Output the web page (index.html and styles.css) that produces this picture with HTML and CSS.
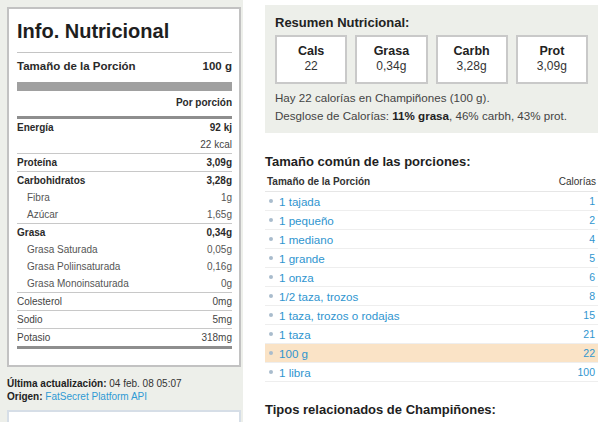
FILE: index.html
```html
<!DOCTYPE html>
<html lang="es">
<head>
<meta charset="utf-8">
<title>Champiñones</title>
<link rel="stylesheet" href="styles.css">
</head>
<body>
<div class="page">
  <aside class="side">
    <div class="label">
      <h1 class="label-title">Info. Nutricional</h1>
      <div class="serving"><span>Tamaño de la Porción</span><span>100 g</span></div>
      <div class="bar"></div>
      <div class="per">Por porción</div>
      <div class="rows">
        <div class="row b"><span>Energía</span><span>92 kj</span></div>
        <div class="row"><span></span><span>22 kcal</span></div>
        <div class="row b sep"><span>Proteína</span><span>3,09g</span></div>
        <div class="row b sep"><span>Carbohidratos</span><span>3,28g</span></div>
        <div class="row sub"><span>Fibra</span><span>1g</span></div>
        <div class="row sub"><span>Azúcar</span><span>1,65g</span></div>
        <div class="row b sep"><span>Grasa</span><span>0,34g</span></div>
        <div class="row sub"><span>Grasa Saturada</span><span>0,05g</span></div>
        <div class="row sub"><span>Grasa Poliinsaturada</span><span>0,16g</span></div>
        <div class="row sub"><span>Grasa Monoinsaturada</span><span>0g</span></div>
        <div class="row sep"><span>Colesterol</span><span>0mg</span></div>
        <div class="row sep"><span>Sodio</span><span>5mg</span></div>
        <div class="row sep"><span>Potasio</span><span>318mg</span></div>
      </div>
    </div>
    <div class="meta">
      <div><b>Última actualización:</b> 04 feb. 08 05:07</div>
      <div><b>Origen:</b> <a href="#" class="link">FatSecret Platform API</a></div>
    </div>
    <div class="next-box"></div>
  </aside>

  <main class="main">
    <section class="summary">
      <h2 class="sum-title">Resumen Nutricional:</h2>
      <div class="facts">
        <div class="fact"><div class="fact-name">Cals</div><div class="fact-val">22</div></div>
        <div class="fact"><div class="fact-name">Grasa</div><div class="fact-val">0,34g</div></div>
        <div class="fact"><div class="fact-name">Carbh</div><div class="fact-val">3,28g</div></div>
        <div class="fact"><div class="fact-name">Prot</div><div class="fact-val">3,09g</div></div>
      </div>
      <p class="sum-text">Hay 22 calorías en Champiñones (100 g).</p>
      <p class="sum-text">Desglose de Calorías: <b>11% grasa</b>, 46% carbh, 43% prot.</p>
    </section>

    <h2 class="sec-title">Tamaño común de las porciones:</h2>
    <div class="portions">
      <div class="p-head"><span class="p-head-l">Tamaño de la Porción</span><span>Calorías</span></div>
      <div class="p-row"><a href="#" class="p-name">1 tajada</a><span class="p-cal">1</span></div>
      <div class="p-row"><a href="#" class="p-name">1 pequeño</a><span class="p-cal">2</span></div>
      <div class="p-row"><a href="#" class="p-name">1 mediano</a><span class="p-cal">4</span></div>
      <div class="p-row"><a href="#" class="p-name">1 grande</a><span class="p-cal">5</span></div>
      <div class="p-row"><a href="#" class="p-name">1 onza</a><span class="p-cal">6</span></div>
      <div class="p-row"><a href="#" class="p-name">1/2 taza, trozos</a><span class="p-cal">8</span></div>
      <div class="p-row"><a href="#" class="p-name">1 taza, trozos o rodajas</a><span class="p-cal">15</span></div>
      <div class="p-row"><a href="#" class="p-name">1 taza</a><span class="p-cal">21</span></div>
      <div class="p-row active"><a href="#" class="p-name">100 g</a><span class="p-cal">22</span></div>
      <div class="p-row"><a href="#" class="p-name">1 libra</a><span class="p-cal">100</span></div>
    </div>

    <h2 class="sec-title related">Tipos relacionados de Champiñones:</h2>
  </main>
</div>
</body>
</html>
```

FILE: styles.css
```css
html, body {
  margin: 0;
  padding: 0;
  background: #ffffff;
}
body {
  font-family: "Liberation Sans", Arial, Helvetica, sans-serif;
  color: #333;
}
.page {
  display: flex;
  width: 600px;
  height: 422px;
  overflow: hidden;
}

/* ---------- left column ---------- */
.side {
  width: 234px;
  flex: none;
  background: #edefea;
  padding: 7px 2px 0 7px;
}
.label {
  background: #fff;
  border: 2px solid #c2c2c2;
  padding: 10px 7px 16px 8px;
}
.label-title {
  margin: 0;
  font-size: 20px;
  line-height: 24px;
  font-weight: bold;
  color: #1e1e1e;
  padding-bottom: 9px;
  border-bottom: 1px solid #c4c4c4;
}
.serving {
  display: flex;
  justify-content: space-between;
  font-size: 11.5px;
  line-height: 14px;
  font-weight: bold;
  color: #2a2a2a;
  padding-top: 6px;
}
.bar {
  height: 9px;
  background: #a0a0a0;
  margin-top: 9px;
}
.per {
  text-align: right;
  font-size: 10px;
  line-height: 17px;
  font-weight: bold;
  color: #2a2a2a;
  margin-top: 3px;
  padding-bottom: 5px;
  border-bottom: 3px solid #8e8e8e;
}
.rows {
  border-bottom: 3px solid #8e8e8e;
}
.row {
  display: flex;
  justify-content: space-between;
  font-size: 10px;
  line-height: 17px;
  color: #444;
}
.row.b {
  font-weight: bold;
  color: #2a2a2a;
}
.row.sep {
  border-top: 1px solid #c8c8c8;
}
.row.sub {
  padding-left: 10px;
  color: #555;
}
.meta {
  margin-top: 10px;
  font-size: 10px;
  line-height: 13px;
  color: #333;
}
.meta b {
  color: #222;
}
.link {
  color: #2f9ad4;
  text-decoration: none;
}
.next-box {
  margin-top: 7px;
  height: 40px;
  background: #fff;
  border: 2px solid #d6dee7;
}

/* ---------- right column ---------- */
.main {
  margin-left: 22px;
  width: 333px;
  flex: none;
}
.summary {
  margin-top: 5px;
  background: #edefea;
  padding: 10px 10px 8px 10px;
}
.sum-title {
  margin: 0;
  font-size: 13px;
  line-height: 16px;
  font-weight: bold;
  color: #222;
}
.facts {
  display: flex;
  gap: 8px;
  margin-top: 4px;
}
.fact {
  flex: 1;
  background: #fff;
  border: 2px solid #c9c9c9;
  text-align: center;
  padding-top: 7px;
  height: 38px;
}
.fact-name {
  font-size: 12.5px;
  line-height: 15px;
  font-weight: bold;
  color: #222;
}
.fact-val {
  font-size: 12px;
  line-height: 15px;
  color: #333;
}
.sum-text {
  margin: 0;
  font-size: 11.6px;
  line-height: 18px;
  color: #444;
}
.facts + .sum-text {
  margin-top: 5px;
}
.sum-text b {
  color: #222;
}
.sec-title {
  margin: 21px 0 0 0;
  font-size: 13px;
  line-height: 16px;
  font-weight: bold;
  color: #1e1e1e;
}
.portions {
  margin-top: 5px;
}
.p-head {
  display: flex;
  justify-content: space-between;
  font-size: 10px;
  line-height: 14px;
  padding: 0 2px 2px 2px;
  border-bottom: 1px solid #e6e6e6;
  color: #333;
}
.p-head-l {
  font-weight: bold;
}
.p-row {
  display: flex;
  justify-content: space-between;
  align-items: center;
  height: 18px;
  padding: 0 3px 0 4px;
  border-bottom: 1px solid #eeeeee;
}
.p-row.active {
  background: #fae3c6;
}
.p-name {
  position: relative;
  padding-left: 10px;
  font-size: 11.6px;
  color: #2f95cf;
  text-decoration: none;
}
.p-name::before {
  content: "";
  position: absolute;
  left: 0;
  top: 50%;
  width: 4px;
  height: 4px;
  margin-top: -2px;
  border-radius: 50%;
  background: #a9bccd;
}
.p-cal {
  font-size: 10.5px;
  color: #2f95cf;
}
.related {
  margin-top: 20px;
}
```
